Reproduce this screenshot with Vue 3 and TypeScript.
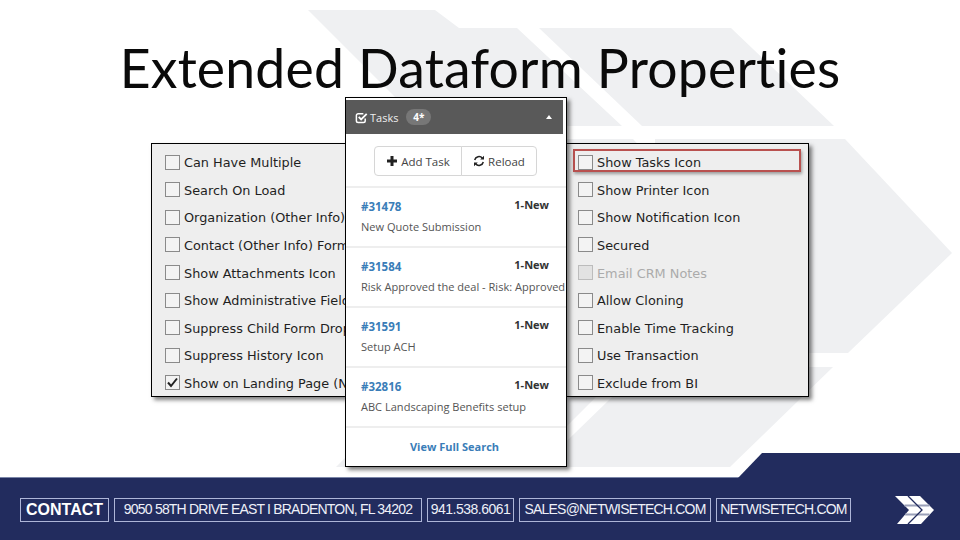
<script setup lang="ts">
const leftRows = [
  { label: 'Can Have Multiple' },
  { label: 'Search On Load' },
  { label: 'Organization (Other Info) Form' },
  { label: 'Contact (Other Info) Form' },
  { label: 'Show Attachments Icon' },
  { label: 'Show Administrative Fields' },
  { label: 'Suppress Child Form Dropdown' },
  { label: 'Suppress History Icon' },
  { label: 'Show on Landing Page (New)', checked: true },
]
const rightRows = [
  { label: 'Show Tasks Icon', marked: true },
  { label: 'Show Printer Icon' },
  { label: 'Show Notification Icon' },
  { label: 'Secured' },
  { label: 'Email CRM Notes', disabled: true },
  { label: 'Allow Cloning' },
  { label: 'Enable Time Tracking' },
  { label: 'Use Transaction' },
  { label: 'Exclude from BI' },
]
const tasks = [
  { id: '#31478', text: 'New Quote Submission' },
  { id: '#31584', text: 'Risk Approved the deal - Risk: Approved the deal' },
  { id: '#31591', text: 'Setup ACH' },
  { id: '#32816', text: 'ABC Landscaping Benefits setup' },
]
const contacts = [
  { text: '9050 58TH DRIVE EAST I BRADENTON, FL 34202', cls: 'chip-address' },
  { text: '941.538.6061', cls: 'chip-phone' },
  { text: 'SALES@NETWISETECH.COM', cls: 'chip-mail' },
  { text: 'NETWISETECH.COM', cls: 'chip-web' },
]
</script>

<template>
  <div class="slide">
    <svg class="backdrop" viewBox="0 0 960 540" aria-hidden="true">
      <polygon points="308,10 435,10 459,28 517,28 622,126 424,126" />
      <polygon points="539,28 731,28 834,126 642,126" />
      <polygon points="500,139 633,139 740,253 640,353 500,353" />
      <polygon points="655,139 845,139 952,253 848,353 655,353" />
      <polygon points="626,367 526,467 336,467 436,367" />
      <polygon points="833,367 730,467 540,467 643,367" />
    </svg>

    <h1 class="title">Extended Dataform Properties</h1>

    <main class="stage">
      <section class="panel panel-left">
        <label v-for="row in leftRows" :key="row.label" class="row">
          <span class="box">
            <svg v-if="row.checked" viewBox="0 0 15 15" class="tick"><path d="M3 7.500 6 11 12 3.500" /></svg>
          </span>
          <span class="row-text">{{ row.label }}</span>
        </label>
      </section>

      <section class="tasks">
        <header class="tasks-head">
          <svg class="head-icon" viewBox="0 0 14 14">
            <path d="M11 8v2.600A1.900 1.900 0 0 1 9.100 12.500H3.400a1.900 1.900 0 0 1-1.900-1.900V4.900A1.900 1.900 0 0 1 3.400 3H9" fill="none" stroke="#fff" stroke-width="1.600" />
            <path d="M4 6.400 6.600 9 12.600 3" fill="none" stroke="#fff" stroke-width="2" />
          </svg>
          <span class="head-label">Tasks</span>
          <span class="badge">4*</span>
          <span class="caret"></span>
        </header>
        <div class="toolbar">
          <div class="btn-group">
            <button class="btn btn-add" type="button">
              <svg viewBox="0 0 12 12" class="btn-icon"><path d="M4.500 1h3v3.500H11v3H7.500V11h-3V7.500H1v-3h3.500z" fill="#222" /></svg>
              Add Task
            </button>
            <button class="btn btn-reload" type="button">
              <svg viewBox="0 0 12 12" class="btn-icon">
                <path d="M1.700 5A4.400 4.400 0 0 1 9.400 3.200" fill="none" stroke="#222" stroke-width="1.500" />
                <path d="M10.300 7A4.400 4.400 0 0 1 2.600 8.800" fill="none" stroke="#222" stroke-width="1.500" />
                <path d="M11 .8V4.600H7.200zM1 11.200V7.400H4.800z" fill="#222" />
              </svg>
              Reload
            </button>
          </div>
        </div>
        <article v-for="task in tasks" :key="task.id" class="task">
          <div class="task-top">
            <a class="task-id">{{ task.id }}</a>
            <span class="task-state">1-New</span>
          </div>
          <div class="task-text">{{ task.text }}</div>
        </article>
        <a class="view-all">View Full Search</a>
      </section>

      <section class="panel panel-right">
        <label v-for="row in rightRows" :key="row.label" class="row" :class="{ off: row.disabled }">
          <span class="box"></span>
          <span class="row-text">{{ row.label }}</span>
          <span v-if="row.marked" class="callout"></span>
        </label>
      </section>
    </main>

    <footer class="footer">
      <span class="chip chip-strong">CONTACT</span>
      <span v-for="item in contacts" :key="item.text" class="chip" :class="item.cls">{{ item.text }}</span>
      <svg class="logo" viewBox="0 0 40 30">
        <polygon points="0,1 25,1 39,15 26,29 2,29 14,15" fill="#fff" />
        <path d="M9.500 10.500H34.500M10.100 19.500H34.500" stroke="#9aa0b8" stroke-width="2" />
        <path d="M13 1 27 15 13 29" fill="none" stroke="#222c5e" stroke-width="1.300" />
      </svg>
    </footer>
  </div>
</template>

<style>
html, body { margin: 0; background: #fff; }
</style>

<style scoped>
.slide {
  position: relative;
  width: 960px;
  height: 540px;
  overflow: hidden;
  background: #fff;
  display: flex;
  flex-direction: column;
}
.backdrop {
  position: absolute;
  inset: 0;
  width: 960px;
  height: 540px;
}
.backdrop polygon { fill: #eff0f2; }
.title {
  position: relative;
  margin: 0;
  height: 97px;
  padding-top: 36px;
  box-sizing: border-box;
  font: 400 53.500px/62px "Lato", sans-serif;
  letter-spacing: 0.2px;
  color: #0a0a0a;
  text-align: center;
  white-space: nowrap;
}
.stage {
  position: relative;
  flex: 1;
  display: flex;
  align-items: flex-start;
  padding-left: 151px;
}
.panel {
  margin-top: 46px;
  height: 254px;
  box-sizing: border-box;
  padding-top: 5.400px;
  background: #eeeeee;
  border: 1px solid #000;
  box-shadow: 3px 3px 4px rgba(0, 0, 0, 0.5);
  overflow: hidden;
}
.panel-left {
  width: 194px;
  padding-left: 13px;
  border-right: 0;
}
.panel-right {
  width: 243px;
  margin-left: -1px;
  padding-left: 12px;
  border-left: 0;
  position: relative;
}
.row {
  position: relative;
  display: flex;
  align-items: center;
  height: 27.600px;
  white-space: nowrap;
  font: 12.850px/16px "DejaVu Sans", sans-serif;
  color: #1f1f1f;
}
.box {
  flex: none;
  position: relative;
  width: 15px;
  height: 15px;
  box-sizing: border-box;
  margin: -2px 4px 0 0;
  border: 1px solid #8a8a8a;
  background: #f3f3f3;
}
.tick {
  position: absolute;
  left: -1px;
  top: -1px;
  width: 15px;
  height: 15px;
}
.tick path { fill: none; stroke: #222; stroke-width: 2; }
.row.off { color: #ababab; }
.row.off .box { border-color: #bcbcbc; background: #e2e2e2; }
.callout {
  position: absolute;
  left: -5px;
  top: 0;
  width: 228px;
  height: 23px;
  box-sizing: border-box;
  border: 2px solid #b9514f;
  box-shadow: 1px 2px 3px rgba(0, 0, 0, 0.35);
}
.tasks {
  position: relative;
  z-index: 2;
  flex: none;
  width: 222px;
  height: 370px;
  box-sizing: border-box;
  background: #fff;
  border: 1px solid #000;
  box-shadow: 3px 3px 4px rgba(0, 0, 0, 0.5);
  overflow: hidden;
  font-family: "Open Sans", sans-serif;
}
.tasks-head {
  display: flex;
  align-items: center;
  height: 34px;
  margin: 2px 3px 0 0;
  padding: 0 11px 0 9px;
  background: #595959;
  color: #eee;
  font-size: 11px;
}
.head-icon { width: 13px; height: 13px; margin-right: 2px; }
.badge {
  margin-left: 8px;
  width: 25px;
  height: 16px;
  border-radius: 8px;
  background: #777;
  color: #fff;
  font-weight: 700;
  font-size: 10px;
  line-height: 16px;
  text-align: center;
}
.caret {
  margin-left: auto;
  width: 0;
  height: 0;
  border-left: 3.500px solid transparent;
  border-right: 3.500px solid transparent;
  border-bottom: 4px solid #fff;
}
.toolbar {
  display: flex;
  justify-content: center;
  height: 54px;
  box-sizing: border-box;
  padding: 12px 1px 0 0;
  border-bottom: 2px solid #eeeeee;
}
.btn-group { display: flex; height: 30px; }
.btn {
  display: flex;
  align-items: center;
  justify-content: center;
  gap: 3px;
  height: 30px;
  padding: 0;
  background: #fff;
  border: 1px solid #d6d6d6;
  color: #444;
  font: 11.500px "Open Sans", sans-serif;
}
.btn-add { width: 88px; border-radius: 4px 0 0 4px; }
.btn-reload { width: 76px; margin-left: -1px; border-radius: 0 4px 4px 0; }
.btn-icon { width: 12px; height: 12px; }
.task {
  height: 60px;
  box-sizing: border-box;
  padding: 9px 0 0 15px;
  border-bottom: 2px solid #eeeeee;
}
.task-top {
  display: flex;
  justify-content: space-between;
  padding-right: 17px;
  height: 18px;
  line-height: 16px;
  font-size: 11px;
  font-weight: 700;
}
.task-id { color: #3a7db8; margin-top: 2px; font-size: 11.500px; }
.task-state { color: #333; }
.task-text {
  margin-top: 4px;
  font-size: 11.050px;
  line-height: 15px;
  color: #555;
  white-space: nowrap;
}
.view-all {
  display: block;
  padding-top: 11px;
  text-align: center;
  font-size: 11px;
  font-weight: 700;
  line-height: 16px;
  color: #3a7db8;
  margin-right: 3px;
}
.footer {
  position: relative;
  flex: none;
  height: 63px;
  box-sizing: border-box;
  display: flex;
  align-items: center;
  gap: 5px;
  padding: 1px 25px 0 20px;
  background: #222c5e;
  border-top: 1px solid #7b86a8;
}
.footer::before {
  content: "";
  position: absolute;
  right: 0;
  bottom: 100%;
  width: 222px;
  height: 25px;
  background: #222c5e;
  clip-path: polygon(24px 0, 100% 0, 100% 100%, 0 100%);
}
.chip {
  flex: none;
  box-sizing: border-box;
  display: flex;
  align-items: center;
  justify-content: center;
  height: 24px;
  border: 1.500px solid #aeb6d8;
  color: #eef0f8;
  font: 14px/21px "Liberation Sans", sans-serif;
  letter-spacing: -0.8px;
  white-space: nowrap;
}
.chip-strong { width: 89px; font-weight: 700; font-size: 16px; letter-spacing: 0; color: #fff; }
.chip-address { width: 308px; }
.chip-phone { width: 87px; letter-spacing: -0.5px; }
.chip-mail { width: 192px; }
.chip-web { width: 135px; }
.logo { margin-left: auto; width: 40px; height: 30px; }
</style>
